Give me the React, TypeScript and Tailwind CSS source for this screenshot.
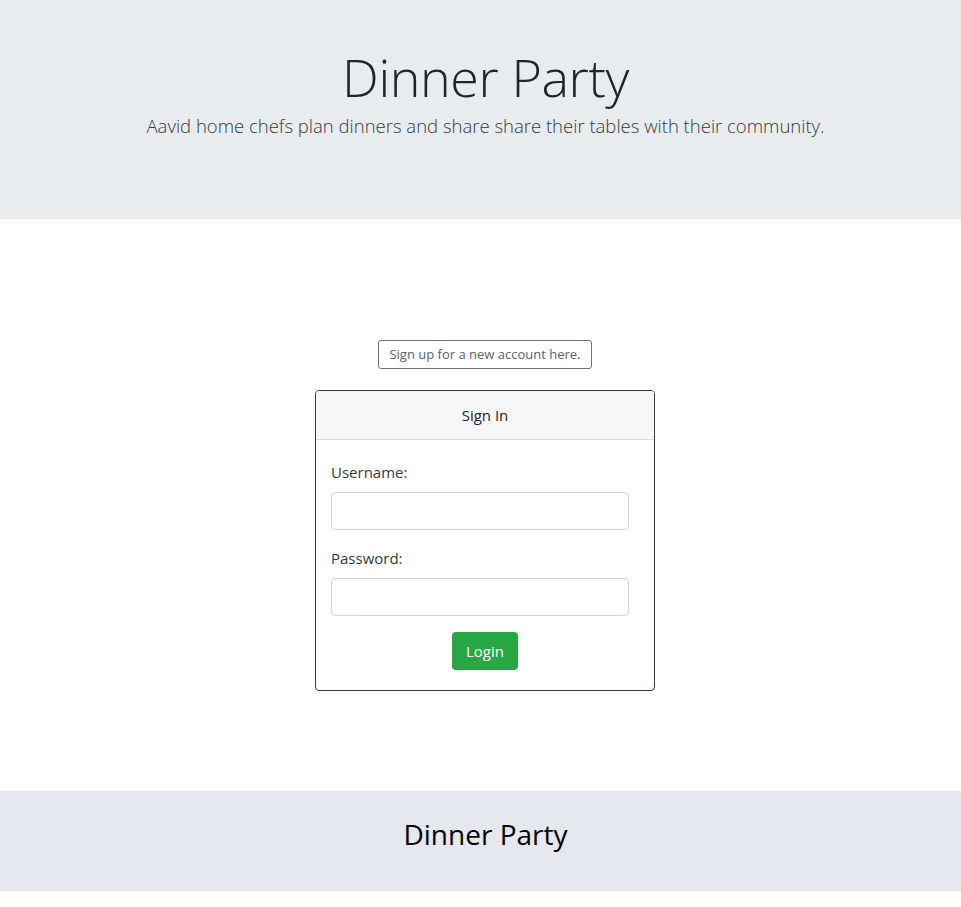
import React from "react";

export default function App() {
  const font = { fontFamily: '"Open Sans", "Noto Sans", sans-serif' };
  return (
    <div className="min-h-[907px] bg-white text-[#212529]" style={font}>
      <header className="h-[219px] bg-[#e9ecef] flex flex-col items-center pt-[46px] pl-[10px]">
        <h1 className="text-[52px] font-light leading-[1.2] text-[#212529] tracking-[-0.4px]">Dinner Party</h1>
        <p className="text-[18.5px] font-light leading-[1.2] text-[#343a40] mt-[7px]">
          Aavid home chefs plan dinners and share share their tables with their community.
        </p>
      </header>
      <main className="flex flex-col items-center pt-[121px] h-[572px] pl-[9px]">
        <button className="h-[29px] w-[214px] border border-[#6c757d] rounded-[3px] text-[13px] text-[#5a6268] bg-white">
          Sign up for a new account here.
        </button>
        <div className="mt-[21px] w-[340px] border border-[#343a40] rounded-[4px] overflow-hidden">
          <div className="h-[49px] bg-[#f7f7f7] border-b border-[#dcdcdc] flex items-center justify-center text-[15px] text-[#212529]">
            Sign In
          </div>
          <div className="px-[15px] pt-[22px] pb-[20px] flex flex-col">
            <label className="text-[15px] text-[#343a40] leading-[20px]">Username:</label>
            <input className="mt-[10px] h-[38px] w-[298px] border border-[#ced4da] rounded-[4px] px-3 outline-none" />
            <label className="mt-[18px] text-[15px] text-[#343a40] leading-[20px]">Password:</label>
            <input type="password" className="mt-[10px] h-[38px] w-[298px] border border-[#ced4da] rounded-[4px] px-3 outline-none" />
            <div className="flex justify-center mt-[16px]">
              <button className="h-[38px] w-[66px] bg-[#28a745] text-white rounded-[4px] text-[15px]">Login</button>
            </div>
          </div>
        </div>
      </main>
      <footer className="h-[100px] bg-[#e5e8ee] flex justify-center pt-[24px] pl-[10px]">
        <span className="text-[28px] leading-[38px] text-black">Dinner Party</span>
      </footer>
    </div>
  );
}
